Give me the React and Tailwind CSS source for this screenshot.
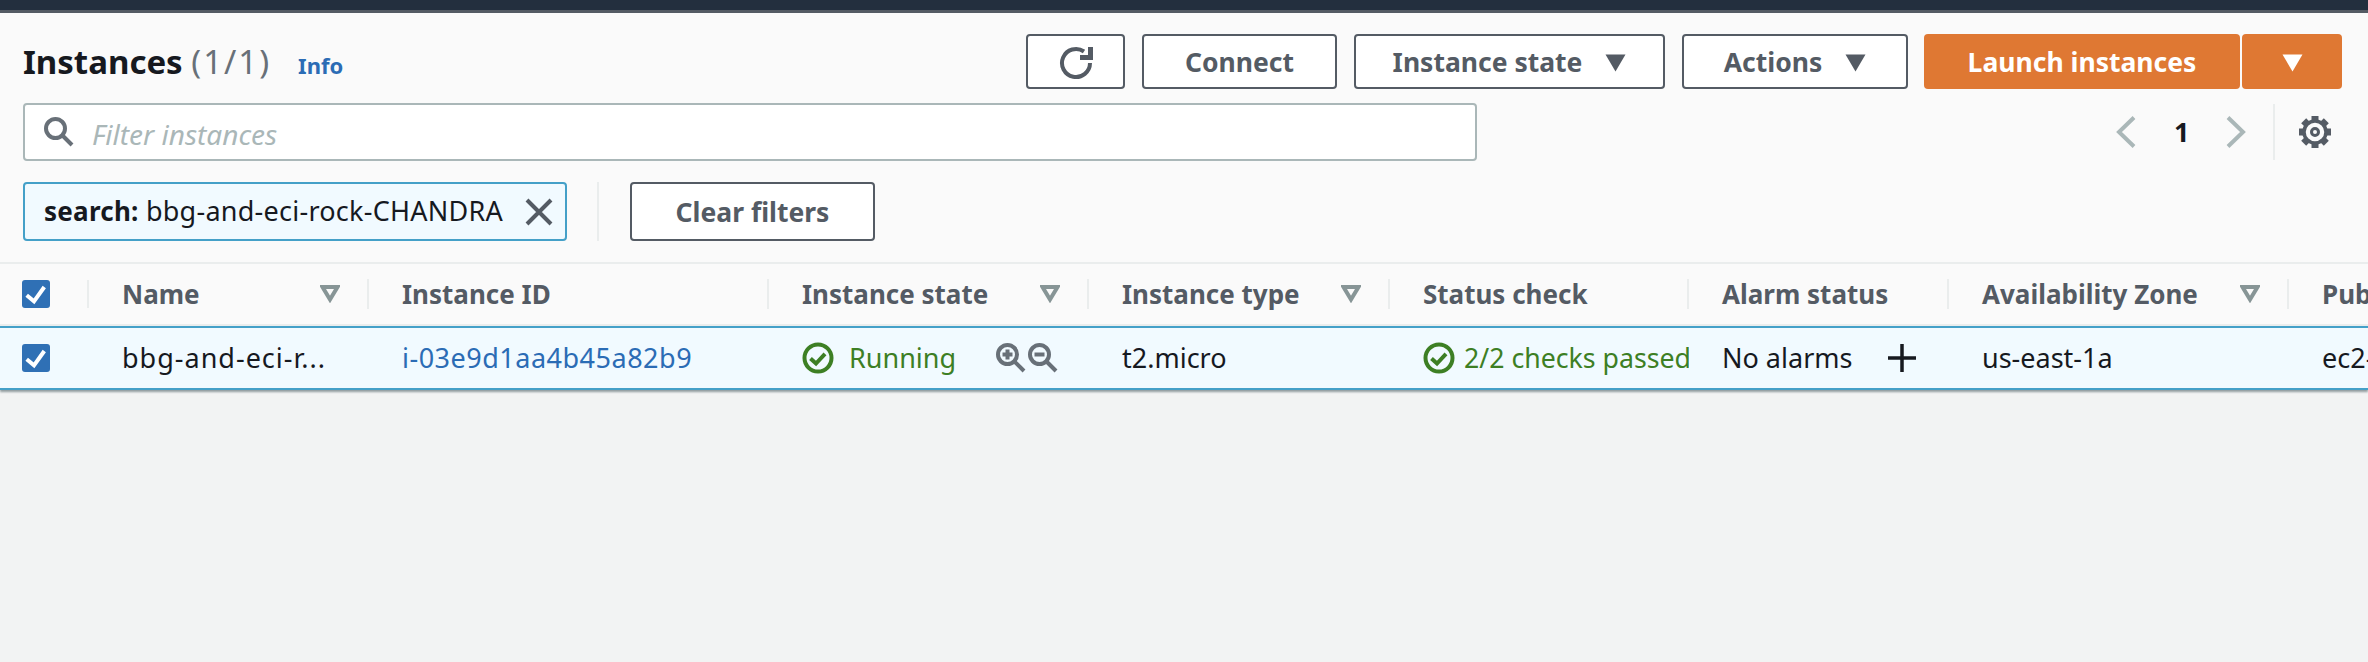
const font = "[font-family:'Noto_Sans',sans-serif]"

function Caret({ color = '#545b64' }) {
  return (
    <svg width="21" height="18" viewBox="0 0 21 18" className="shrink-0">
      <path d="M0.5 0.5H20.5L10.5 17.5Z" fill={color} />
    </svg>
  )
}

function SortIcon() {
  return (
    <svg width="20" height="18" viewBox="0 0 20 18" className="shrink-0">
      <path d="M2.5 2H17.5L10 14.5Z" fill="none" stroke="#879596" strokeWidth="4" />
    </svg>
  )
}

function Check() {
  return (
    <svg width="28" height="28" viewBox="0 0 28 28" className="block">
      <rect width="28" height="28" rx="3" fill="#2f70b5" />
      <path d="M4.7 15.3L12 21.3L22.3 7" fill="none" stroke="#fff" strokeWidth="4" />
    </svg>
  )
}

function OkIcon() {
  return (
    <svg width="32" height="32" viewBox="0 0 32 32" className="shrink-0">
      <circle cx="16" cy="16" r="13.5" fill="none" stroke="#3d7f24" strokeWidth="4" />
      <path d="M8.5 16.5L14 21.5L23 11.8" fill="none" stroke="#3d7f24" strokeWidth="4" />
    </svg>
  )
}

function ZoomIcon({ plus }) {
  return (
    <svg width="30" height="30" viewBox="0 0 30 30" className="shrink-0">
      <circle cx="11.5" cy="11.5" r="9.5" fill="none" stroke="#687078" strokeWidth="4" />
      <path d="M18 18L28 28" stroke="#687078" strokeWidth="4" />
      <path d="M6.5 11.5H16.5" stroke="#687078" strokeWidth="4" />
      {plus && <path d="M11.5 6.5V16.5" stroke="#687078" strokeWidth="4" />}
    </svg>
  )
}

function Gear() {
  const teeth = [0, 45, 90, 135, 180, 225, 270, 315]
  return (
    <svg width="34" height="34" viewBox="0 0 34 34" className="ml-[23px] mr-[13px] shrink-0">
      {teeth.map(deg => (
        <rect key={deg} x="13.5" y="1" width="7" height="6" fill="#545b64" transform={`rotate(${deg} 17 17)`} />
      ))}
      <circle cx="17" cy="17" r="11" fill="none" stroke="#545b64" strokeWidth="3.5" />
      <circle cx="17" cy="17" r="3.5" fill="none" stroke="#545b64" strokeWidth="3" />
    </svg>
  )
}

function Button({ children, className = '' }) {
  return (
    <button className={`flex h-[55px] items-center justify-center rounded-[4px] border-2 border-[#545b64] bg-white pt-[2px] text-[26.5px] font-bold text-[#545b64] ${className}`}>
      {children}
    </button>
  )
}

function HeaderCell({ label, sort, width }) {
  return (
    <div className={`flex h-[30px] shrink-0 items-center justify-between border-r-2 border-[#eaeded] pl-[33px] pr-[27px] text-[26px] font-bold text-[#545b64] ${width}`}>
      <span className="whitespace-nowrap">{label}</span>
      {sort && <SortIcon />}
    </div>
  )
}

function Cell({ children, width }) {
  return <div className={`flex shrink-0 items-center overflow-hidden whitespace-nowrap pl-[33px] ${width}`}>{children}</div>
}

export default function App() {
  return (
    <div className={`flex min-h-screen flex-col bg-[#f2f3f3] text-[#16191f] ${font}`}>
      <div className="h-[10px] bg-[#232f3e]" />
      <div className="h-[3px] bg-[#545b64]" />

      {/* toolbar */}
      <div className="bg-[#fafafa] px-[23px] pb-[21px] pt-[21px]">
        <div className="flex h-[55px] items-center justify-between pr-[3px]">
          <div className="flex items-baseline">
            <h1 className="text-[33px] font-bold">Instances <span className="font-normal tracking-[2px] text-[#687078]">(1/1)</span></h1>
            <a className="ml-[27px] text-[22px] font-bold text-[#2b6cb5]">Info</a>
          </div>
          <div className="flex items-center">
            <Button className="w-[99px]">
              <svg width="36" height="34" viewBox="0 0 36 34">
                <path d="M26 5.5A14 14 0 1 0 32 17" fill="none" stroke="#545b64" strokeWidth="4" />
                <path d="M22 9H30V1H35V14H22Z" fill="#545b64" />
              </svg>
            </Button>
            <Button className="ml-[17px] w-[195px]">Connect</Button>
            <Button className="ml-[17px] w-[311px] gap-[23px]">Instance state <Caret /></Button>
            <Button className="ml-[17px] w-[226px] gap-[23px]">Actions <Caret /></Button>
            <button className="ml-[16px] flex h-[55px] w-[316px] items-center justify-center rounded-[4px] bg-[#df7833] pt-[2px] text-[26.5px] font-bold text-white">Launch instances</button>
            <button className="ml-[2px] flex h-[55px] w-[100px] items-center justify-center rounded-[4px] bg-[#df7833] pt-[2px]"><Caret color="#fff" /></button>
          </div>
        </div>

        <div className="mt-[14px] flex h-[58px] items-center justify-between">
          <div className="flex h-full w-[1454px] items-center rounded-[4px] border-2 border-[#aab7b8] bg-white pl-[19px]">
            <svg width="30" height="30" viewBox="0 0 30 30" className="shrink-0">
              <circle cx="11.5" cy="11.5" r="9.5" fill="none" stroke="#687078" strokeWidth="4" />
              <path d="M18 18L28 28" stroke="#687078" strokeWidth="4" />
            </svg>
            <span className="ml-[18px] pt-[4px] text-[28px] italic text-[#aab7b8]">Filter instances</span>
          </div>
          <div className="flex h-full items-center">
            <svg width="20" height="32" viewBox="0 0 20 32"><path d="M18 1.5L3 16L18 30.5" fill="none" stroke="#aab7b8" strokeWidth="4" /></svg>
            <span className="ml-[38px] w-[15px] text-[27px] font-bold">1</span>
            <svg width="20" height="32" viewBox="0 0 20 32" className="ml-[37px]"><path d="M2 1.5L17 16L2 30.5" fill="none" stroke="#aab7b8" strokeWidth="4" /></svg>
            <div className="ml-[27px] h-[56px] w-[2px] bg-[#eaeded]" />
            <Gear />
          </div>
        </div>

        <div className="mt-[21px] flex h-[59px] items-center">
          <div className="flex h-full w-[544px] items-center rounded-[4px] border-2 border-[#44a0c8] bg-[#f1faff] pl-[19px] text-[27px]">
            <span className="whitespace-nowrap tracking-[0.25px]"><b className="text-[26px]">search:</b> bbg-and-eci-rock-CHANDRA</span>
            <svg width="28" height="28" viewBox="0 0 28 28" className="ml-[22px] shrink-0">
              <path d="M2 2L26 26M26 2L2 26" stroke="#545b64" strokeWidth="4" />
            </svg>
          </div>
          <div className="ml-[30px] h-full w-[2px] bg-[#eaeded]" />
          <Button className="ml-[31px] h-[59px] w-[245px]">Clear filters</Button>
        </div>
      </div>

      {/* table */}
      <div className="flex h-[64px] items-center overflow-hidden border-y-2 border-[#eaeded] bg-[#fafafa]">
        <div className="flex w-[89px] shrink-0 items-center border-r-2 border-[#eaeded] pl-[22px]"><Check /></div>
        <HeaderCell label="Name" sort width="w-[280px]" />
        <HeaderCell label="Instance ID" width="w-[400px]" />
        <HeaderCell label="Instance state" sort width="w-[320px]" />
        <HeaderCell label="Instance type" sort width="w-[301px]" />
        <HeaderCell label="Status check" width="w-[299px]" />
        <HeaderCell label="Alarm status" width="w-[260px]" />
        <HeaderCell label="Availability Zone" sort width="w-[340px]" />
        <div className="w-[79px] shrink-0 overflow-hidden whitespace-nowrap pl-[33px] text-[26px] font-bold text-[#545b64]">Public IPv4 DNS</div>
      </div>
      <div className="flex h-[64px] items-center overflow-hidden border-y-2 border-[#44a0c8] bg-[#f1faff] text-[27px] shadow-[0_2px_2px_rgba(0,28,36,0.4)]">
        <div className="w-[89px] shrink-0 pl-[22px]"><Check /></div>
        <Cell width="w-[280px]"><span className="tracking-[1px]">bbg-and-eci-r...</span></Cell>
        <Cell width="w-[400px]"><a className="tracking-[0.5px] text-[#2b6cb5]">i-03e9d1aa4b45a82b9</a></Cell>
        <Cell width="w-[320px]">
          <OkIcon />
          <span className="ml-[15px] text-[#3d7f24]">Running</span>
          <span className="ml-[40px]"><ZoomIcon plus /></span>
          <span className="ml-[2px]"><ZoomIcon /></span>
        </Cell>
        <Cell width="w-[301px]">t2.micro</Cell>
        <Cell width="w-[299px]">
          <OkIcon />
          <span className="ml-[9px] text-[26.7px] text-[#3d7f24]">2/2 checks passed</span>
        </Cell>
        <Cell width="w-[260px]">
          <span>No alarms</span>
          <svg width="28" height="28" viewBox="0 0 28 28" className="ml-[36px] shrink-0"><path d="M14 0V28M0 14H28" stroke="#16191f" strokeWidth="3.5" /></svg>
        </Cell>
        <Cell width="w-[340px]">us-east-1a</Cell>
        <Cell width="w-[79px]">ec2-54-1</Cell>
      </div>
    </div>
  )
}
